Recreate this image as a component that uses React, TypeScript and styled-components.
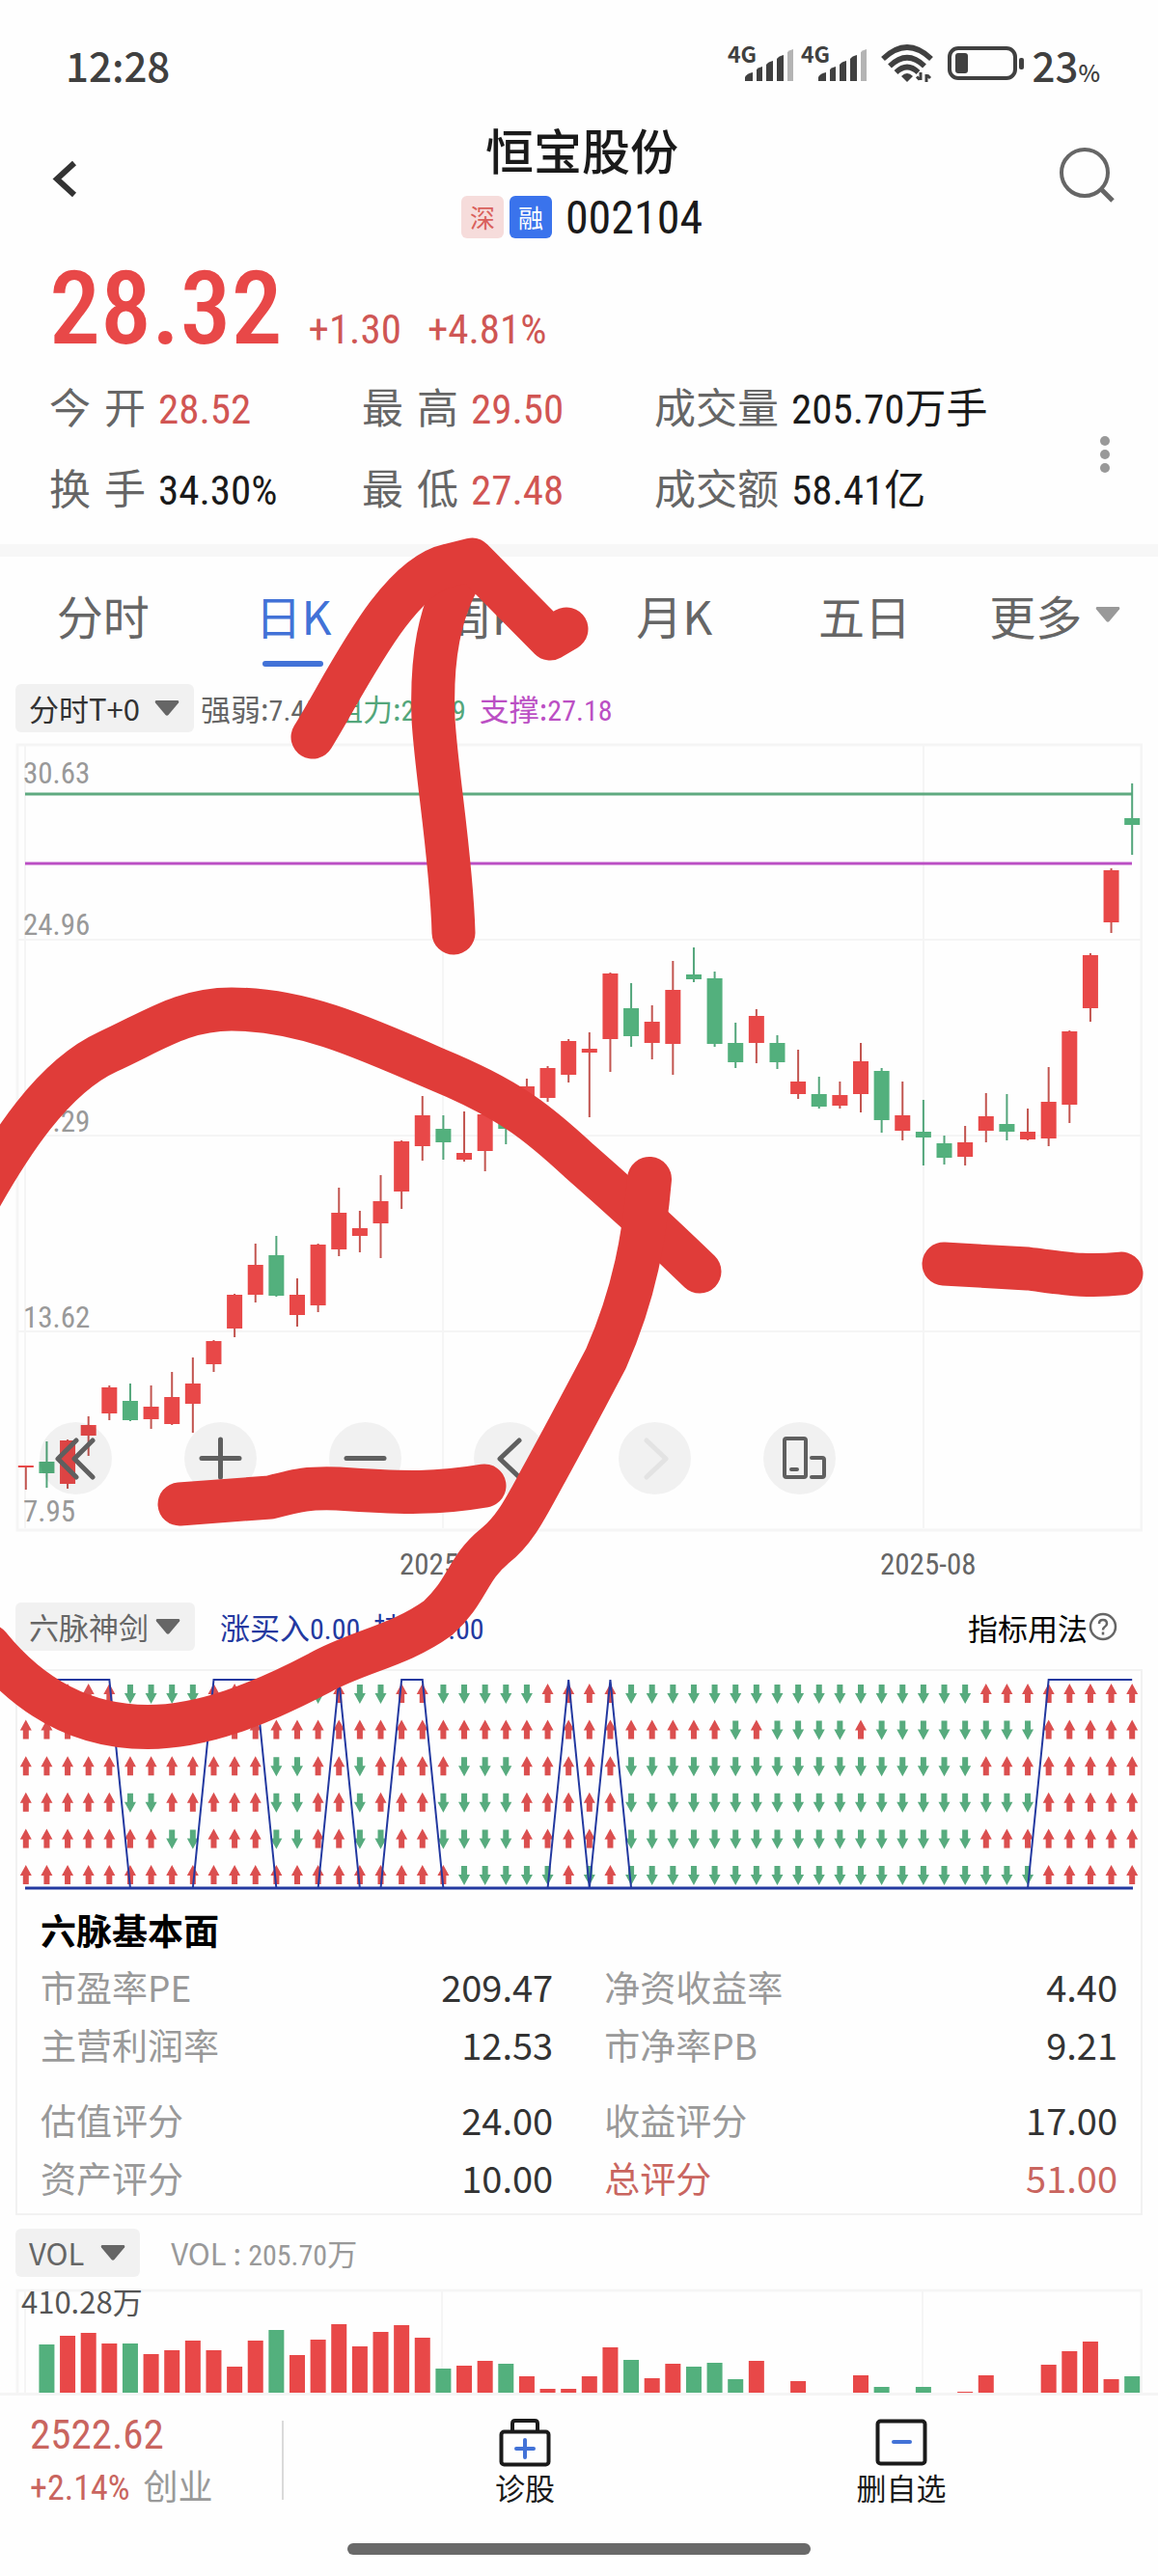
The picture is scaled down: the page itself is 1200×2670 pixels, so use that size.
import React from "react";
import styled, { createGlobalStyle } from "styled-components";

const TEXT_FONT = '"Noto Sans CJK SC", "Noto Sans", sans-serif';
const NUMBER_FONT = '"Roboto Condensed", Roboto, "Noto Sans CJK SC", sans-serif';

const UP = "#e84848";
const DOWN = "#53b07d";
const GRID = "#f5f5f5";
const MARKER = "#e03c39";

const Global = createGlobalStyle`
  *, *::before, *::after { box-sizing: border-box; }
  body { margin: 0; background: #fefefe; }
  button, select { font: inherit; color: inherit; border: 0; background: none; padding: 0; margin: 0; }
`;

const Page = styled.div`
  position: relative;
  overflow: hidden;
  font-family: ${TEXT_FONT};
  color: #1a1a1a;
  background: #fefefe;
`;

/* ---------- status bar ---------- */

const StatusBar = styled.div`
  display: flex;
  align-items: center;
  justify-content: space-between;
  height: 128px;
  padding: 4px 60px 0 68px;
  color: #404040;
  font-size: 42px;
  font-weight: 500;
`;

const StatusIcons = styled.div`
  display: flex;
  align-items: center;
  gap: 4px;
`;

const BatteryText = styled.span`
  margin-left: 4px;
  small {
    font-size: 24px;
  }
`;

/* ---------- header ---------- */

const Header = styled.header`
  display: grid;
  grid-template-columns: 1fr auto 1fr;
  align-items: center;
  padding: 1px 44px 3px 50px;
`;

const IconButton = styled.button<{ $end?: boolean }>`
  display: flex;
  justify-self: ${(p) => (p.$end ? "end" : "start")};
`;

const TitleBlock = styled.div`
  display: flex;
  flex-direction: column;
  align-items: center;
  gap: 24px;
`;

const Title = styled.h1`
  margin: 0;
  font-size: 50px;
  line-height: 50px;
  font-weight: 500;
`;

const CodeLine = styled.div`
  display: flex;
  align-items: center;
  gap: 6px;
  height: 44px;
  font-family: ${NUMBER_FONT};
  font-size: 48px;
`;

const Badge = styled.span<{ $solid?: boolean }>`
  width: 44px;
  height: 44px;
  border-radius: 6px;
  font-family: ${TEXT_FONT};
  font-size: 26px;
  line-height: 44px;
  text-align: center;
  color: ${(p) => (p.$solid ? "#fff" : "#d9605c")};
  background: ${(p) => (p.$solid ? "#3a73ec" : "#f6dcdb")};
`;

const Code = styled.span`
  margin-left: 8px;
`;

/* ---------- quote ---------- */

const Quote = styled.section`
  padding: 10px 50px 28px 51px;
`;

const PriceLine = styled.div`
  display: flex;
  align-items: baseline;
  gap: 27px;
  line-height: 120px;
  height: 120px;
  font-family: ${NUMBER_FONT};
  font-size: 43px;
  color: #cf5654;
`;

const Price = styled.strong`
  font-size: 106px;
  font-weight: 500;
  color: ${UP};
`;

const StatArea = styled.div`
  display: flex;
  align-items: center;
  margin-top: 12px;
`;

const StatGrid = styled.dl`
  flex: 1;
  display: grid;
  grid-template-columns: 324fr 303fr 462fr;
  row-gap: 24px;
  margin: 0;
`;

const Stat = styled.div`
  display: flex;
  align-items: baseline;
  gap: 13px;
  height: 60px;
  line-height: 56px;
  font-size: 43px;
`;

const StatLabel = styled.dt`
  min-width: 100px;
  text-align-last: justify;
  color: #666;
`;

const StatValue = styled.dd<{ $up?: boolean }>`
  margin: 0;
  font-family: ${NUMBER_FONT};
  color: ${(p) => (p.$up ? "#d15553" : "#1a1a1a")};
  small {
    font-family: ${TEXT_FONT};
    font-size: 43px;
  }
`;

const MoreButton = styled.button`
  display: flex;
  padding-top: 14px;
`;

const Band = styled.div`
  height: 13px;
  background: #f7f7f7;
`;

/* ---------- tabs ---------- */

const Tabs = styled.nav`
  display: grid;
  grid-template-columns: repeat(6, 1fr);
  padding: 30px 8px 0;
`;

const Tab = styled.button<{ $active?: boolean }>`
  display: flex;
  flex-direction: column;
  align-items: center;
  gap: 18px;
  font-size: 48px;
  line-height: 60px;
  color: ${(p) => (p.$active ? "#4272d7" : "#666")};
  &::after {
    content: "";
    width: 63px;
    height: 6px;
    border-radius: 3px;
    background: ${(p) => (p.$active ? "#4272d7" : "transparent")};
  }
`;

const TabLabel = styled.span`
  display: flex;
  align-items: center;
  gap: 14px;
`;

/* ---------- indicator rows ---------- */

const IndicatorRow = styled.div<{ $top: number }>`
  display: flex;
  align-items: center;
  height: 50px;
  margin-top: ${(p) => p.$top}px;
  padding: 0 42px 0 16px;
  font-size: 31px;
`;

const Picker = styled.label<{ $dark?: boolean; $pad?: number }>`
  display: grid;
  align-items: center;
  height: 50px;
  border-radius: 6px;
  background: #f1f1f1;
  color: ${(p) => (p.$dark ? "#333" : "#666")};
  & > * {
    grid-area: 1 / 1;
  }
  select {
    appearance: none;
    field-sizing: content;
    height: 50px;
    padding: 0 ${(p) => p.$pad ?? 48}px 2px 14px;
  }
  svg {
    justify-self: end;
    margin-right: 15px;
    pointer-events: none;
  }
`;

const Readout = styled.span<{ $color: string; $gap: number }>`
  margin-left: ${(p) => p.$gap}px;
  padding-bottom: 2px;
  color: ${(p) => p.$color};
  white-space: pre;
  b {
    font-family: ${NUMBER_FONT};
    font-weight: 400;
    font-size: 30px;
  }
`;

const HelpLink = styled.a`
  display: flex;
  align-items: center;
  gap: 1px;
  margin-left: auto;
  color: #000;
  text-decoration: none;
`;

/* ---------- charts ---------- */

const ChartBox = styled.div<{ $top: number }>`
  position: relative;
  margin: ${(p) => p.$top}px 16px 0;
  & > svg {
    display: block;
    width: 100%;
    height: auto;
  }
  text {
    font-family: ${TEXT_FONT};
    font-size: 31px;
  }
`;

const AxisText = styled.text`
  && {
    font-family: ${NUMBER_FONT};
    font-size: 31px;
  }
`;

const ChartTools = styled.div`
  position: absolute;
  left: 25px;
  top: 704px;
  display: flex;
  gap: 75px;
`;

const ToolButton = styled.button`
  width: 75px;
  height: 75px;
  border-radius: 50%;
  background: rgba(0, 0, 0, 0.05);
  color: #5f5f5f;
  svg {
    display: block;
  }
  &:disabled {
    color: #e3e3e3;
  }
`;

const Panel = styled.section`
  margin: 19px 16px 0;
  border: 2px solid #f2f2f2;
  padding-bottom: 7px;
  & > svg {
    display: block;
    width: 100%;
    height: auto;
  }
`;

const PanelTitle = styled.h2`
  margin: 9px 24px 4px;
  font-size: 37px;
  line-height: 50px;
  font-weight: 700;
  color: #000;
`;

const Facts = styled.table`
  width: calc(100% - 48px);
  margin: 0 24px;
  border-collapse: collapse;
  table-layout: fixed;
  font-size: 37px;
  line-height: 60px;
  th,
  td {
    height: 60px;
    padding: 0;
    vertical-align: bottom;
  }
  tbody + tbody tr:first-child > * {
    height: 78px;
  }
`;

const FactLabel = styled.th<{ $second?: boolean; $total?: boolean }>`
  text-align: left;
  font-weight: 400;
  color: ${(p) => (p.$total ? "#c9655f" : "#999")};
  && {
    padding-left: ${(p) => (p.$second ? 53 : 0)}px;
  }
`;

const FactValue = styled.td<{ $total?: boolean }>`
  text-align: right;
  font-size: 38px;
  color: ${(p) => (p.$total ? "#c9655f" : "#333")};
`;

/* ---------- bottom bar ---------- */

const BottomBar = styled.footer`
  display: flex;
  align-items: center;
  border-top: 3px solid #f5f5f5;
  padding: 13px 71px 0 31px;
`;

const IndexQuote = styled.div`
  width: 261px;
  line-height: 54px;
  font-family: ${NUMBER_FONT};
  font-size: 43px;
  color: #c9655f;
`;

const IndexChange = styled.div`
  display: flex;
  align-items: baseline;
  gap: 14px;
  height: 54px;
  line-height: 50px;
  font-size: 36px;
  span {
    font-family: ${TEXT_FONT};
    color: #999;
  }
`;

const Divider = styled.div`
  width: 2px;
  height: 82px;
  margin-right: 55px;
  background: #dadada;
`;

const Action = styled.button`
  flex: 1;
  display: flex;
  flex-direction: column;
  align-items: center;
  gap: 1px;
  padding-top: 4px;
  font-size: 31px;
  line-height: 40px;
`;

const HomeIndicator = styled.div`
  width: 40%;
  height: 12px;
  margin: 32px auto 23px;
  border-radius: 6px;
  background: #696969;
`;

const MarkerLayer = styled.svg`
  position: absolute;
  left: 0;
  top: 0;
  width: 100%;
  height: auto;
  pointer-events: none;
`;

/* ---------- data ---------- */

// Horizontal slot of each trading day, shared by the three charts.
const slotX = (i: number) => 26.8 + i * 21.63;

type Candle = [up: 0 | 1, high: number, top: number, bottom: number, low: number];

const candles: Candle[] = [
  [1, 749, 749, 751, 774], [0, 724, 745, 757, 772], [1, 722, 723, 768, 773], [1, 698, 707, 718, 739],
  [1, 666, 668, 695, 702], [0, 664, 682, 702, 703], [1, 666, 688, 701, 711], [1, 652, 678, 706, 707],
  [1, 637, 664, 685, 715], [1, 619, 620, 644, 652], [1, 571, 572, 607, 616], [1, 519, 541, 572, 580],
  [0, 511, 531, 573, 574], [1, 555, 572, 593, 605], [1, 519, 520, 583, 590], [1, 461, 487, 525, 532],
  [1, 485, 503, 511, 528], [1, 448, 475, 498, 534], [1, 412, 413, 465, 483], [1, 366, 386, 418, 433],
  [0, 386, 400, 414, 432], [1, 382, 425, 432, 434], [1, 382, 385, 423, 444], [0, 386, 391, 400, 416],
  [1, 348, 356, 370, 374], [1, 335, 337, 368, 372], [1, 307, 309, 344, 352], [1, 300, 317, 321, 388],
  [1, 238, 239, 307, 341], [0, 249, 275, 304, 315], [1, 272, 289, 311, 328], [1, 226, 256, 312, 344],
  [0, 212, 240, 245, 248], [0, 237, 244, 312, 315], [0, 290, 311, 331, 337], [1, 276, 283, 311, 332],
  [0, 303, 311, 331, 338], [1, 318, 351, 364, 369], [0, 346, 364, 377, 379], [1, 351, 365, 376, 379],
  [1, 311, 330, 364, 383], [0, 337, 340, 391, 404], [1, 351, 386, 402, 412], [0, 370, 403, 409, 438],
  [0, 407, 415, 430, 437], [1, 397, 414, 429, 438], [1, 363, 387, 402, 414], [0, 364, 395, 403, 412],
  [1, 379, 403, 411, 412], [1, 336, 372, 410, 418], [1, 298, 299, 375, 394], [1, 218, 220, 275, 289],
  [1, 130, 132, 186, 197], [0, 42, 78, 85, 116],
];

// Signal rows as run lengths that alternate up, down, up, ...
const signalRows = [
  [5, 4, 3, 3, 1, 2, 2, 5, 4, 17, 8],
  [34, 1, 1, 4, 1, 8, 5],
  [12, 2, 2, 1, 4, 3, 5, 17, 8],
  [5, 2, 5, 2, 2, 1, 3, 4, 5, 20, 5],
  [7, 2, 3, 2, 2, 2, 2, 4, 5, 17, 8],
  [21, 5, 1, 1, 1, 20, 5],
];

// Days on which all six signals agree, same run-length form.
const agreement = [5, 4, 3, 3, 1, 2, 2, 6, 1, 1, 1, 20, 5];

const expand = (runs: number[]) => runs.flatMap((n, i) => Array<boolean>(n).fill(i % 2 === 0));

const volumes: [up: 0 | 1, height: number][] = [
  [1, 0], [0, 50], [1, 59], [1, 62], [1, 51], [0, 51], [1, 40], [1, 44], [1, 54], [1, 44], [1, 27],
  [1, 54], [0, 65], [1, 39], [1, 55], [1, 71], [1, 48], [1, 63], [1, 70], [1, 57], [0, 25], [1, 28],
  [1, 33], [0, 30], [1, 17], [1, 4], [1, 4], [1, 17], [1, 47], [0, 34], [1, 15], [1, 30], [0, 27],
  [0, 31], [0, 14], [1, 33], [1, 0], [1, 12], [1, 0], [1, 0], [1, 18], [0, 6], [0, 0], [0, 6], [1, 0],
  [1, 1], [1, 18], [1, 0], [1, 0], [1, 29], [1, 43], [1, 53], [1, 14], [0, 17],
];

const stats = [
  { label: "今 开", value: "28.52", up: true },
  { label: "最 高", value: "29.50", up: true },
  { label: "成交量", value: "205.70", unit: "万手" },
  { label: "换 手", value: "34.30%" },
  { label: "最 低", value: "27.48", up: true },
  { label: "成交额", value: "58.41", unit: "亿" },
];

const factGroups = [
  [
    ["市盈率PE", "209.47", "净资收益率", "4.40"],
    ["主营利润率", "12.53", "市净率PB", "9.21"],
  ],
  [
    ["估值评分", "24.00", "收益评分", "17.00"],
    ["资产评分", "10.00", "总评分", "51.00"],
  ],
];

/* ---------- small drawings ---------- */

const Signal = () => (
  <svg width="72" height="58" viewBox="0 -10 72 58" fill="#404040">
    <text x="0" y="18" fontSize="23" fontWeight="700" fontFamily="Noto Sans CJK SC">4G</text>
    <path d="M18 33q2-4 8-5v9h-8z" />
    <path d="M30 25q2-2 6-3v15h-6z" />
    <path d="M40 20q2-3 7-4v21h-7z" />
    <path d="M51 14q2-3 7-4v27h-7z" />
    <path d="M62 7q2-2 6-3v33h-6z" fill="#b4b4b4" />
  </svg>
);

const Wifi = () => (
  <svg width="72" height="40" viewBox="-7 0 72 40" fill="none" stroke="#404040" strokeWidth="5.5">
    <path d="M2 15Q27-9 52 15M9 22.500Q27 5 45 22.500M15.500 29Q27 18 38.500 29" />
    <path d="M21 33q6-6 12 0l-6 6z" fill="#404040" stroke="none" />
    <path d="M41 29v8M37 33.500l3 3M47 39v-8M48 32l3 3" strokeWidth="3" />
  </svg>
);

const Battery = () => (
  <svg width="80" height="36" viewBox="0 0 80 36">
    <rect x="2" y="2" width="68" height="31" rx="9" fill="none" stroke="#404040" strokeWidth="4" />
    <rect x="8" y="7" width="13" height="21" rx="3" fill="#404040" />
    <rect x="74" y="12" width="5" height="12" rx="2" fill="#404040" />
  </svg>
);

const Caret = ({ color = "#666" }: { color?: string }) => (
  <svg width="26" height="18" viewBox="0 0 26 18" fill={color}>
    <path d="M2 1h22q2 .5 1 2.500L14.500 16q-1.500 1.500-3 0L1 3.500Q0 1.500 2 1z" />
  </svg>
);

const ToolIcon = ({ d, width = 5 }: { d: string; width?: number }) => (
  <svg width="75" height="75" viewBox="0 0 75 75" fill="none" stroke="currentColor" strokeWidth={width} strokeLinecap="round" strokeLinejoin="round">
    <path d={d} />
  </svg>
);

const tools = [
  { name: "最早", d: "M38 19 19 38l19 19M55 19 36 38l19 19" },
  { name: "放大", d: "M18 37.500h39M37.500 18v39" },
  { name: "缩小", d: "M18 37.500h39" },
  { name: "向左", d: "M47 19 27 38l20 19" },
  { name: "向右", d: "M29 19 49 38 29 57", disabled: true },
  { name: "横屏", d: "M24 17h18q2 0 2 2v36q0 2-2 2H24q-2 0-2-2V19q0-2 2-2zM29 49h6M50 37h11q2 0 2 2v16q0 2-2 2H50", width: 4 },
];

/* ---------- charts ---------- */

const CandleChart = () => (
  <svg viewBox="16 0 1168 876" role="img" aria-label="日K线图">
    <g stroke={GRID} strokeWidth="3" fill="none">
      <rect x="18" y="2" width="1165" height="814" />
      <path d="M26 2v812M459 2v812M957 2v812M18 204h1165M18 407h1165M18 610h1165" strokeWidth="2" />
    </g>
    <g fill="#999">
      {["30.63", "24.96", "19.29", "13.62", "7.95"].map((t, i) => (
        <AxisText key={t} x="24" y={[42, 199, 403, 606, 807][i]}>{t}</AxisText>
      ))}
    </g>
    <g fill="#666">
      <AxisText x="414" y="862">2025-07</AxisText>
      <AxisText x="912" y="862">2025-08</AxisText>
    </g>
    <path d="M26 53h1147" stroke="#5faa80" strokeWidth="3" />
    <path d="M26 125h1147" stroke="#bb4fc4" strokeWidth="3" />
    {candles.map(([up, high, top, bottom, low], i) => (
      <g key={i} fill={up ? UP : DOWN}>
        <rect x={slotX(i) - 1} y={high} width="2" height={low - high} fill={up ? "#c25550" : "#53a67b"} />
        <rect x={slotX(i) - 8} y={top} width="16" height={bottom - top} />
      </g>
    ))}
  </svg>
);

const SignalChart = () => {
  const line = expand(agreement)
    .map((on, i) => `${i ? "L" : "M"}${slotX(i)} ${on ? 9 : 225}`)
    .join("");
  return (
    <svg viewBox="18 0 1164 234" role="img" aria-label="六脉神剑信号">
      {signalRows.map((runs, r) =>
        expand(runs).map((up, i) => (
          <path
            key={`${r}-${i}`}
            transform={`translate(${slotX(i)} ${13 + r * 37.6})`}
            fill={up ? "#db4f4f" : "#57ab7e"}
            d={up ? "M0 0 6 11H3V20H-3V11H-6z" : "M0 21 6 10H3V1H-3V10H-6z"}
          />
        ))
      )}
      <g stroke="#2339a0" fill="none">
        <path d={line} strokeWidth="2" />
        <path d="M26 225h1148" strokeWidth="3" />
      </g>
    </svg>
  );
};

const VolumeChart = () => (
  <svg viewBox="16 -12 1168 120" role="img" aria-label="成交量图">
    <path d="M18 108V2h1165v106" stroke={GRID} strokeWidth="3" fill="none" />
    <path d="M26 2v106M458 2v106M956 2v106" stroke={GRID} strokeWidth="2" />
    <text x="22" y="26" fill="#555">410.28万</text>
    {volumes.map(([up, h], i) => (
      <rect key={i} x={slotX(i) - 8} y={108 - h} width="16" height={h} fill={up ? UP : DOWN} />
    ))}
  </svg>
);

const HandMarks = () => (
  <MarkerLayer viewBox="0 0 1200 2670" fill="none" stroke={MARKER} strokeWidth="45" strokeLinecap="round" strokeLinejoin="round" aria-hidden="true">
    <path d="M470 967C468 890 452 800 449 745C447 690 452 630 487 582" />
    <path d="M324 764C362 702 410 598 465 586L489 580L570 662L587 652" />
    <path d="M-30 1258C10 1185 55 1116 112 1090C160 1068 190 1046 240 1046C310 1046 370 1072 452 1108C530 1140 560 1166 600 1203C640 1238 690 1284 725 1318" />
    <path d="M673 1222C668 1280 658 1340 628 1408C608 1446 590 1480 566 1524C546 1560 535 1585 512 1603C484 1626 484 1650 454 1677C414 1706 370 1712 331 1734C270 1766 210 1790 153 1790C90 1790 35 1764 -12 1706" strokeWidth="46" />
    <path d="M186 1559L280 1552C310 1544 320 1542 350 1543C420 1548 455 1548 502 1540" />
    <path d="M978 1310L1065 1315C1105 1320 1125 1324 1162 1320" />
  </MarkerLayer>
);

export default function App() {
  return (
    <Page>
      <Global />
      <StatusBar>
        <span>12:28</span>
        <StatusIcons>
          <Signal />
          <Signal />
          <Wifi />
          <Battery />
          <BatteryText>23<small>%</small></BatteryText>
        </StatusIcons>
      </StatusBar>

      <Header>
        <IconButton aria-label="返回">
          <svg width="32" height="44" viewBox="0 0 32 44" fill="none" stroke="#333" strokeWidth="6">
            <path d="M27 3 9 19.500 27 36" />
          </svg>
        </IconButton>
        <TitleBlock>
          <Title>恒宝股份</Title>
          <CodeLine>
            <Badge>深</Badge>
            <Badge $solid>融</Badge>
            <Code>002104</Code>
          </CodeLine>
        </TitleBlock>
        <IconButton $end aria-label="搜索">
          <svg width="60" height="72" viewBox="0 0 60 72" fill="none" stroke="#666" strokeWidth="4">
            <circle cx="28" cy="27" r="24" />
            <path d="M45 44 57 56" strokeWidth="5" />
          </svg>
        </IconButton>
      </Header>

      <Quote>
        <PriceLine>
          <Price>28.32</Price>
          <span>+1.30</span>
          <span>+4.81%</span>
        </PriceLine>
        <StatArea>
          <StatGrid>
            {stats.map((s) => (
              <Stat key={s.label}>
                <StatLabel>{s.label}</StatLabel>
                <StatValue $up={s.up}>{s.value}{s.unit && <small>{s.unit}</small>}</StatValue>
              </Stat>
            ))}
          </StatGrid>
          <MoreButton aria-label="更多行情">
            <svg width="10" height="40" viewBox="0 0 10 40" fill="#999">
              <circle cx="5" cy="6" r="5" />
              <circle cx="5" cy="20" r="5" />
              <circle cx="5" cy="34" r="5" />
            </svg>
          </MoreButton>
        </StatArea>
      </Quote>
      <Band />

      <Tabs>
        <Tab>分时</Tab>
        <Tab $active>日K</Tab>
        <Tab>周K</Tab>
        <Tab>月K</Tab>
        <Tab>五日</Tab>
        <Tab><TabLabel>更多<Caret color="#999" /></TabLabel></Tab>
      </Tabs>

      <IndicatorRow $top={18}>
        <Picker $dark $pad={56}>
          <select aria-label="主图指标"><option>分时T+0</option></select>
          <Caret />
        </Picker>
        <Readout $color="#666" $gap={7}>强弱:<b>7.45</b></Readout>
        <Readout $color="#53a67b" $gap={14}>阻力:<b>29.19</b></Readout>
        <Readout $color="#bb4fc4" $gap={14}>支撑:<b>27.18</b></Readout>
      </IndicatorRow>
      <ChartBox $top={11}>
        <CandleChart />
        <ChartTools>
          {tools.map((t) => (
            <ToolButton key={t.name} aria-label={t.name} disabled={t.disabled}>
              <ToolIcon d={t.d} width={t.width} />
            </ToolButton>
          ))}
        </ChartTools>
      </ChartBox>

      <IndicatorRow $top={15}>
        <Picker>
          <select aria-label="副图指标"><option>六脉神剑</option></select>
          <Caret />
        </Picker>
        <Readout $color="#2339a0" $gap={26}>涨买入<b>0.00</b></Readout>
        <Readout $color="#2339a0" $gap={14}>持股<b>0.00</b></Readout>
        <HelpLink href="#usage">
          指标用法
          <svg width="30" height="30" viewBox="0 0 30 30" fill="none" stroke="#666" strokeWidth="2.500">
            <circle cx="15" cy="15" r="13" />
            <path d="M11 12q0-4 4-4t4 4q0 2-2.500 3.500Q15 16.500 15 18.500M15 20.500v3" />
          </svg>
        </HelpLink>
      </IndicatorRow>
      <Panel>
        <SignalChart />
        <PanelTitle>六脉基本面</PanelTitle>
        <Facts>
          <colgroup>
            <col style={{ width: "25%" }} />
            <col style={{ width: "22.6%" }} />
            <col style={{ width: "27.4%" }} />
            <col style={{ width: "25%" }} />
          </colgroup>
          {factGroups.map((rows, g) => (
            <tbody key={g}>
              {rows.map(([a, av, b, bv]) => (
                <tr key={a}>
                  <FactLabel scope="row">{a}</FactLabel>
                  <FactValue>{av}</FactValue>
                  <FactLabel scope="row" $second $total={b === "总评分"}>{b}</FactLabel>
                  <FactValue $total={b === "总评分"}>{bv}</FactValue>
                </tr>
              ))}
            </tbody>
          ))}
        </Facts>
      </Panel>

      <IndicatorRow $top={14}>
        <Picker $pad={58}>
          <select aria-label="成交量指标"><option>VOL</option></select>
          <Caret />
        </Picker>
        <Readout $color="#999" $gap={32}>VOL : <b>205.70</b>万</Readout>
      </IndicatorRow>
      <ChartBox $top={0}>
        <VolumeChart />
      </ChartBox>

      <BottomBar>
        <IndexQuote>
          2522.62
          <IndexChange>+2.14% <span>创业</span></IndexChange>
        </IndexQuote>
        <Divider />
        <Action>
          <svg width="54" height="50" viewBox="0 0 54 50" fill="none" stroke="#1a1a1a" strokeWidth="4">
            <rect x="2.500" y="13.500" width="49" height="34" rx="3" />
            <path d="M14 14V5q0-3 3-3h20q3 0 3 3v9" />
            <path d="M18 31h18M27 22v18" stroke="#4272d7" strokeLinecap="round" />
          </svg>
          诊股
        </Action>
        <Action>
          <svg width="54" height="50" viewBox="0 0 54 50" fill="none" stroke="#1a1a1a" strokeWidth="4">
            <rect x="2.500" y="2.500" width="49" height="44" rx="3" />
            <path d="M19 24h17" stroke="#4272d7" strokeLinecap="round" />
          </svg>
          删自选
        </Action>
      </BottomBar>
      <HomeIndicator />
      <HandMarks />
    </Page>
  );
}
